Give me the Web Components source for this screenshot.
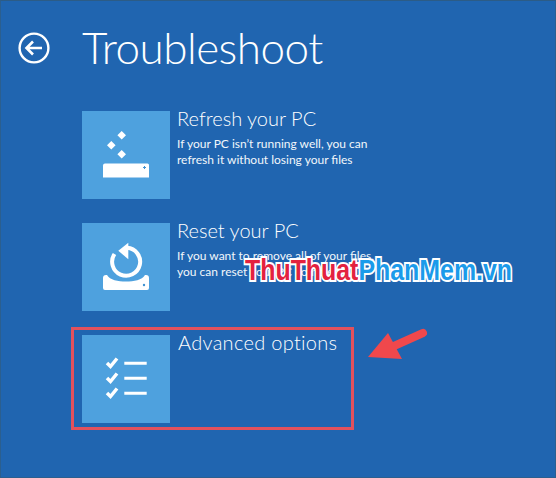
<!DOCTYPE html>
<html>
<head>
<meta charset="utf-8">
<style>
  html, body { margin: 0; height: 100%; background: #2065b0; }
</style>
</head>
<body>
<troubleshoot-screen>
  <option-tile heading="Refresh your PC">
    <svg slot="icon" viewBox="0 0 88 88" width="88" height="88">
      <path fill="#fff" d="M39.700 20l4.300 4.300-4.300 4.300-4.300-4.300zM29.300 30l4.300 4.300-4.300 4.300-4.300-4.300zM39.700 39l4.300 4.300-4.300 4.300-4.300-4.300z"/>
      <path fill="#fff" d="M23 52.500h42.500q1.500 0 1.500 1.500V66.500H21V54.500q0-2 2-2z"/>
      <path fill="#3f92d2" d="M62 55h1v1h1v1h-1v1h-1v-1h-1v-1h1z"/>
    </svg>
    If your PC isn’t running well, you can<br>refresh it without losing your files
  </option-tile>
  <option-tile heading="Reset your PC">
    <svg slot="icon" viewBox="0 0 88 88" width="88" height="88">
      <path fill="none" stroke="#fff" stroke-width="4" d="M45 24.800A14 14 0 1 1 32.500 31"/>
      <path fill="#fff" d="M46.300 19.700v16.600L36.300 27.700z"/>
      <path fill="#fff" d="M21 55q0-3 3-3h1c3 5 11 6.500 19 6.500s16-1.500 19-6.500h1q3 0 3 3v10q0 2-2 2H23q-2 0-2-2z"/>
      <circle cx="62" cy="62" r="1.200" fill="#3f92d2"/>
    </svg>
    If you want to remove all of your files,<br>you can reset your PC completely
  </option-tile>
  <option-tile heading="Advanced options" style="--heading-spacing: 0.3px; --heading-indent: 1px">
    <svg slot="icon" viewBox="0 0 88 88" width="88" height="88">
      <g fill="none" stroke="#fff">
        <path stroke-width="3.500" d="M25 28l3.500 3.500 6.500-8M25 43l3.500 3.500 6.500-8M25 58l3.500 3.500 6.500-8"/>
        <path stroke-width="3" d="M42.300 28.300h22.400M42.300 43.300h22.400M42.300 58.300h22.400"/>
      </g>
    </svg>
  </option-tile>
</troubleshoot-screen>
<script>
class TroubleshootScreen extends HTMLElement {
  constructor() {
    super();
    this.attachShadow({ mode: 'open' });
  }

  connectedCallback() {
    this.shadowRoot.innerHTML = `
      <style>
        :host {
          display: block;
          position: relative;
          box-sizing: border-box;
          width: 556px;
          height: 478px;
          overflow: hidden;
          background: #2065b0;
          border: 1px solid #2b5f8f;
          border-top-color: #2c5c86;
          color: #fff;
          font-family: Lato, "Open Sans", "Liberation Sans", sans-serif;
        }
        .header {
          display: flex;
          align-items: center;
          height: 94px;
          padding-left: 17px;
        }
        .back {
          width: 32px;
          height: 32px;
          margin-right: 32px;
          flex: none;
        }
        h1 {
          margin: 0 0 3px;
          font-size: 44px;
          line-height: 60px;
          font-weight: 300;
          letter-spacing: -0.5px;
        }
        .tiles {
          display: flex;
          flex-direction: column;
          gap: 24px;
          margin-top: 16px;
          padding-left: 81px;
        }
        .marker {
          position: absolute;
          left: 70px;
          top: 326px;
          box-sizing: border-box;
          width: 283px;
          height: 103px;
          border: 3px solid #e2515c;
        }
        .arrow {
          position: absolute;
          left: 361px;
          top: 323px;
        }
        .watermark {
          position: absolute;
          left: 244px;
          top: 251px;
          font-family: "Liberation Sans", sans-serif;
          font-size: 30px;
          line-height: 36px;
          font-weight: 700;
          white-space: nowrap;
          transform: scaleX(0.83);
          transform-origin: left top;
          -webkit-text-stroke: 4px #fff;
          paint-order: stroke fill;
        }
        .thu { color: #e3223f; }
        .phan { color: #1b9bea; }
      </style>
      <div class="header">
        <svg class="back" viewBox="0 0 32 32">
          <circle cx="16" cy="16" r="14.400" fill="none" stroke="#fff" stroke-width="2.400"/>
          <path d="M24 16H9M15 9.500L8.500 16l6.500 6.500" fill="none" stroke="#fff" stroke-width="2.600"/>
        </svg>
        <h1>Troubleshoot</h1>
      </div>
      <div class="tiles"><slot></slot></div>
      <div class="marker"></div>
      <svg class="arrow" width="68" height="40" viewBox="0 0 68 40">
        <path d="M61 9L32 22" stroke="#f0484c" stroke-width="8" stroke-linecap="round" fill="none"/>
        <path d="M6 33L26 9l14 26z" fill="#f0484c"/>
      </svg>
      <div class="watermark"><span class="thu">ThuThuat</span><span class="phan">PhanMem.vn</span></div>
    `;
  }
}

class OptionTile extends HTMLElement {
  constructor() {
    super();
    this.attachShadow({ mode: 'open' });
  }

  connectedCallback() {
    this.shadowRoot.innerHTML = `
      <style>
        :host {
          display: flex;
          height: 88px;
          gap: 7px;
        }
        .icon {
          width: 88px;
          height: 88px;
          flex: none;
          background: #4ea1de;
        }
        .text {
          font-size: 12px;
          line-height: 16px;
          color: #f2f7fb;
        }
        h2 {
          margin: -5px 0 5px var(--heading-indent, 0);
          font-size: 20px;
          line-height: 25px;
          font-weight: 300;
          letter-spacing: var(--heading-spacing, 0);
          color: #fff;
        }
      </style>
      <div class="icon"><slot name="icon"></slot></div>
      <div class="text">
        <h2></h2>
        <slot></slot>
      </div>
    `;
    this.shadowRoot.querySelector('h2').textContent = this.getAttribute('heading');
  }
}

customElements.define('troubleshoot-screen', TroubleshootScreen);
customElements.define('option-tile', OptionTile);
</script>
</body>
</html>
